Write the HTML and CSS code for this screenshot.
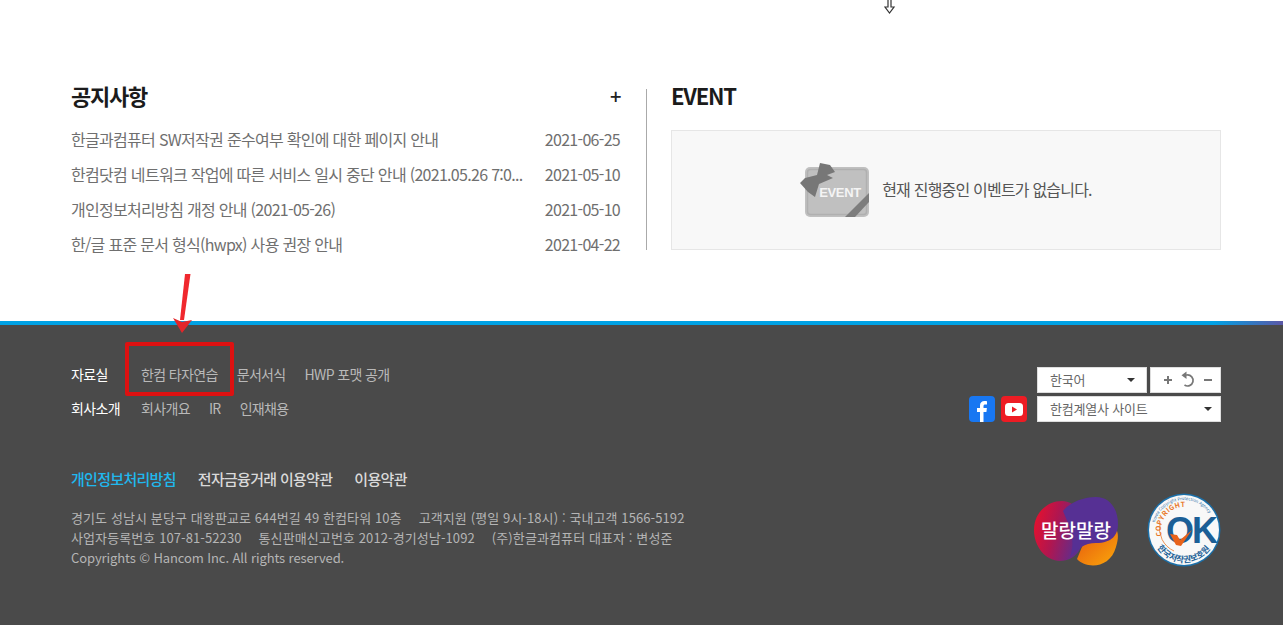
FILE: index.html
```html
<!DOCTYPE html>
<html lang="ko">
<head>
  <meta charset="UTF-8">
  <meta name="viewport" content="width=device-width, initial-scale=1.0">
  <title>한컴 고객지원</title>
  <link rel="stylesheet" href="styles.css">
</head>
<body>
  <section class="board">
    <div class="notice">
      <div class="notice-head">
        <h2 class="board-title">공지사항</h2>
        <a class="more" href="#">+</a>
      </div>
      <ul class="notice-list">
        <li><a href="#">한글과컴퓨터 SW저작권 준수여부 확인에 대한 페이지 안내</a><span>2021-06-25</span></li>
        <li><a href="#">한컴닷컴 네트워크 작업에 따른 서비스 일시 중단 안내 (2021.05.26 7:0...</a><span>2021-05-10</span></li>
        <li><a href="#">개인정보처리방침 개정 안내 (2021-05-26)</a><span>2021-05-10</span></li>
        <li><a href="#">한/글 표준 문서 형식(hwpx) 사용 권장 안내</a><span>2021-04-22</span></li>
      </ul>
    </div>
    <div class="event">
      <h2 class="board-title">EVENT</h2>
      <div class="event-box">
        <svg class="event-icon" width="70" height="56" viewBox="0 0 70 56">
          <rect x="5" y="4" width="64" height="50" rx="5" fill="#c0c0c0"/>
          <rect x="7.500" y="6.500" width="59" height="45" rx="3" fill="none" stroke="#b0b0b0" stroke-width="1.500"/>
          <path d="M45 54 L69 30 V39 L55 54 Z" fill="#7d7d7d"/>
          <path d="M20 0 L30 2 L35 9 L27 12 L33 15 L19 21 L15 34 L8 29 L0 20 L5 15 L17 12 Z" fill="#777"/>
          <text class="event-word" x="40" y="34" text-anchor="middle">EVENT</text>
        </svg>
        <p>현재 진행중인 이벤트가 없습니다.</p>
      </div>
    </div>
  </section>

  <footer class="footer">
    <div class="footer-top">
      <div class="sitemap">
        <div class="sitemap-row">
          <strong>자료실</strong>
          <a href="#">한컴 타자연습</a>
          <a href="#">문서서식</a>
          <a href="#">HWP 포맷 공개</a>
        </div>
        <div class="sitemap-row">
          <strong>회사소개</strong>
          <a href="#">회사개요</a>
          <a href="#">IR</a>
          <a href="#">인재채용</a>
        </div>
      </div>
      <div class="tools">
        <div class="tools-row">
          <div class="select select-lang">한국어<i class="caret"></i></div>
          <div class="zoom-box">
            <svg width="71" height="26" viewBox="0 0 71 26">
              <path d="M14 13h8M18 9v8M54 13h8" stroke="#777" stroke-width="2" fill="none"/>
              <path d="M35 8h2a5.500 5.500 0 1 1-2.500 10" stroke="#777" stroke-width="1.700" fill="none"/>
              <path d="M36.500 4.500v7.500l-5-3.700z" fill="#777"/>
            </svg>
          </div>
        </div>
        <div class="tools-row">
          <a class="social" href="#">
            <svg width="26" height="26" viewBox="0 0 26 26">
              <rect width="26" height="26" rx="4" fill="#1877f2"/>
              <path d="M11 26V16H8v-4h3V9.500C11 6.500 12.800 5 15.500 5c1.200 0 2.300.2 2.500.2v3.300h-1.700c-1.300 0-1.800.7-1.800 1.700V12h3.400l-.5 4h-2.900v10z" fill="#fff"/>
            </svg>
          </a>
          <a class="social" href="#">
            <svg width="26" height="26" viewBox="0 0 26 26">
              <rect width="26" height="26" rx="4" fill="#ed1c24"/>
              <rect x="4" y="7" width="18" height="13" rx="3.500" fill="#fff"/>
              <path d="M11 10.500v6l5-3z" fill="#ed1c24"/>
            </svg>
          </a>
          <div class="select select-family">한컴계열사 사이트<i class="caret"></i></div>
        </div>
      </div>
    </div>

    <div class="footer-bottom">
      <div class="legal">
        <div class="legal-links">
          <a class="privacy" href="#">개인정보처리방침</a>
          <a href="#">전자금융거래 이용약관</a>
          <a href="#">이용약관</a>
        </div>
        <address class="addr">
          <p>경기도 성남시 분당구 대왕판교로 644번길 49 한컴타워 10층<span>고객지원 (평일 9시-18시) : 국내고객 1566-5192</span></p>
          <p>사업자등록번호 107-81-52230<span>통신판매신고번호 2012-경기성남-1092</span><span>(주)한글과컴퓨터 대표자 : 변성준</span></p>
          <p class="copy">Copyrights © Hancom Inc. All rights reserved.</p>
        </address>
      </div>
      <div class="badges">
        <svg class="badge-malang" width="84" height="70" viewBox="0 0 84 70">
          <defs>
            <linearGradient id="mlRed" x1="0" y1="0.200" x2="1" y2="0.500">
              <stop offset="0" stop-color="#e8102c"/>
              <stop offset="0.450" stop-color="#b01650"/>
              <stop offset="1" stop-color="#563094"/>
            </linearGradient>
            <linearGradient id="mlOrange" x1="0" y1="0" x2="1" y2="1">
              <stop offset="0" stop-color="#e5560f"/>
              <stop offset="1" stop-color="#fba80a"/>
            </linearGradient>
          </defs>
          <path d="M43 62C52 72 76 72 82 50C85 40 84 35 82 32L50 45Z" fill="url(#mlOrange)"/>
          <path d="M0 33C0 15 14 4 28 4C42 4 50 18 50 35C50 50 42 64 26 64C12 64 0 50 0 33Z" fill="url(#mlRed)"/>
          <path d="M29 14C36 5 50 0 62 0C76 0 84 12 84 27C84 38 78 46 62 46C50 46 44 52 36 60C42 44 36 30 29 14Z" fill="#563094"/>
          <text class="malang-word" x="42" y="41" text-anchor="middle">말랑말랑</text>
        </svg>
        <svg class="badge-ok" width="74" height="74" viewBox="0 0 74 74">
          <defs>
            <path id="okTop" d="M7 37a30 30 0 0 1 60 0"/>
            <path id="okMid" d="M14.800 43A23 23 0 0 1 48.500 17"/>
            <path id="okBottom" d="M8 51A32 32 0 0 0 66 51"/>
          </defs>
          <circle cx="37" cy="37" r="36.500" fill="#1b6fa8"/>
          <circle cx="37" cy="37" r="35" fill="#f8f8f8"/>
          <path d="M13 30a25 25 0 0 0 14 28" fill="none" stroke="#e8792b" stroke-width="0.800"/>
          <text class="ok-small"><textPath href="#okTop" startOffset="8%">Korea Copyright Protection Agency</textPath></text>
          <text class="ok-copy"><textPath href="#okMid">COPYRIGHT</textPath></text>
          <text class="ok-word" x="44" y="50" text-anchor="middle">OK</text>
          <path d="M23 41l7 1 3 5 12-10-11 16-5-1z" fill="#e8621a"/>
          <text class="ok-bottom"><textPath href="#okBottom" startOffset="6%">한국저작권보호원</textPath></text>
        </svg>
      </div>
    </div>
    <div class="footer-gradient"></div>
  </footer>

  <!-- 캡처에 덧그린 표시 -->
  <svg class="cursor-mark" width="12" height="15" viewBox="0 0 12 15">
    <path d="M4 0v7H1l4.500 6 4.500-6H7V0" fill="#fff" stroke="#333" stroke-width="1.200"/>
  </svg>
  <svg class="red-arrow" width="24" height="62" viewBox="0 0 24 62">
    <path d="M14 2h5.500l-6.500 46h-4z" fill="#f0282e"/>
    <path d="M2 46l9 4 10-2-10 13z" fill="#e3262a"/>
  </svg>
  <div class="red-box"></div>
</body>
</html>
```

FILE: styles.css
```css
* {
  margin: 0;
  padding: 0;
  box-sizing: border-box;
}

body {
  font-family: "Noto Sans CJK KR", "Noto Sans", sans-serif;
  background-color: #fff;
  width: 1283px;
  height: 625px;
  overflow: hidden;
  position: relative;
}

a {
  color: inherit;
  text-decoration: none;
}

ul {
  list-style: none;
}

/* 공지사항, 이벤트 */
.board {
  display: flex;
  height: 321px;
  padding: 83px 62px 0 71px;
}

.board-title {
  font-size: 22px;
  line-height: 28px;
  font-weight: 700;
  letter-spacing: -1.2px;
  color: #1b1b1b;
}

.notice {
  width: 576px;
  height: 161px;
  padding-right: 26px;
  margin-top: 6px;
  border-right: 1px solid #aaa;
}

.notice .board-title {
  margin-top: -4px;
}

.notice-head {
  display: flex;
  justify-content: space-between;
  align-items: center;
  height: 16px;
}

.more {
  font-size: 20px;
  line-height: 16px;
  font-weight: 500;
  letter-spacing: 0;
  color: #222;
  width: 10px;
  margin-top: -2px;
}

.notice-list {
  margin-top: 17px;
}

.notice-list li {
  display: flex;
  justify-content: space-between;
  height: 35px;
  font-size: 16px;
  line-height: 35px;
  letter-spacing: -0.7px;
  color: #6f6f6f;
  white-space: nowrap;
}

.event {
  width: 550px;
  margin-left: 24px;
}

.event .board-title {
  margin-top: -2px;
  margin-bottom: 21px;
}

.event-box {
  display: flex;
  justify-content: center;
  align-items: center;
  gap: 12px;
  height: 120px;
  background: #f8f8f8;
  border: 1px solid #e6e6e6;
  font-size: 16px;
  letter-spacing: -0.8px;
  color: #555;
}

.event-box p {
  margin-top: -2px;
}

.event-icon {
  flex: none;
  margin-top: 2px;
}

.event-word {
  font-family: "Liberation Sans", sans-serif;
  font-size: 13px;
  font-weight: 700;
  fill: #f4f4f4;
  letter-spacing: -0.4px;
}

/* 푸터 */
.footer {
  position: relative;
  height: 304px;
  background: #4a4a4a;
  border-top: 4px solid #00a2e5;
  padding: 0 62px 0 71px;
  color: #b9b9b9;
}

.footer-gradient {
  position: absolute;
  top: -4px;
  right: 0;
  width: 70px;
  height: 4px;
  background: linear-gradient(90deg, #00a2e5, #5b57a6);
}

.footer-top {
  display: flex;
  justify-content: space-between;
  padding-top: 32px;
}

.sitemap-row {
  display: flex;
  height: 34px;
  font-size: 14px;
  line-height: 20px;
  letter-spacing: -0.65px;
  padding-top: 7px;
}

.sitemap-row strong {
  font-weight: 400;
  color: #fff;
  width: 70px;
}

.sitemap-row a {
  margin-right: 19px;
}

.tools {
  display: flex;
  flex-direction: column;
  gap: 3px;
  margin-top: 10px;
}

.tools-row {
  display: flex;
  justify-content: flex-end;
  align-items: center;
  height: 26px;
}

.select {
  position: relative;
  height: 26px;
  background: #fff;
  border: 1px solid #ddd;
  font-size: 13px;
  line-height: 24px;
  padding-left: 12px;
  color: #666;
  letter-spacing: -0.2px;
}

.select-lang {
  width: 110px;
}

.select-family {
  width: 184px;
  margin-left: 10px;
}

.caret {
  position: absolute;
  right: 11px;
  top: 10px;
  border-top: 4px solid #333;
  border-left: 4px solid transparent;
  border-right: 4px solid transparent;
}

.select-family .caret {
  right: 8px;
}

.zoom-box {
  width: 71px;
  height: 26px;
  margin-left: 3px;
  background: #fff;
  border: 1px solid #ddd;
  overflow: hidden;
}

.zoom-box svg {
  display: block;
  margin: -1px;
}

.social {
  display: block;
  width: 26px;
  height: 26px;
  margin-left: 6px;
}

.footer-bottom {
  display: flex;
  justify-content: space-between;
  margin-top: 43px;
}

.legal-links {
  display: flex;
  gap: 22px;
  font-size: 15px;
  line-height: 22px;
  font-weight: 500;
  letter-spacing: -0.7px;
  color: #d9d9d9;
}

.privacy {
  color: #20b8ee;
}

.addr {
  margin-top: 18px;
  font-style: normal;
  font-size: 13px;
  line-height: 20px;
  color: #b5b5b5;
  letter-spacing: 0.1px;
}

.addr span {
  margin-left: 17px;
}

.addr .copy {
  letter-spacing: -0.1px;
}

.badges {
  display: flex;
  align-items: flex-start;
  gap: 29px;
  padding-top: 25px;
}

.badge-malang {
  margin-top: 4px;
}

.malang-word {
  font-size: 19px;
  font-weight: 500;
  fill: #fff;
}

.ok-small {
  font-size: 4.200px;
  fill: #2b6fa8;
}

.ok-copy {
  font-size: 7px;
  font-weight: 700;
  fill: #e8792b;
  letter-spacing: 0.4px;
}

.ok-word {
  font-family: "Liberation Sans", sans-serif;
  font-size: 36px;
  font-weight: 700;
  fill: #1b5f96;
  letter-spacing: -2px;
}

.ok-bottom {
  font-size: 8.500px;
  font-weight: 700;
  fill: #1b5f96;
}

/* 덧그린 표시 */
.cursor-mark {
  position: absolute;
  left: 884px;
  top: 0;
}

.red-arrow {
  position: absolute;
  left: 171px;
  top: 272px;
}

.red-box {
  position: absolute;
  left: 125px;
  top: 342px;
  width: 109px;
  height: 54px;
  border: 4px solid #dd1111;
  border-radius: 2px;
}
```
